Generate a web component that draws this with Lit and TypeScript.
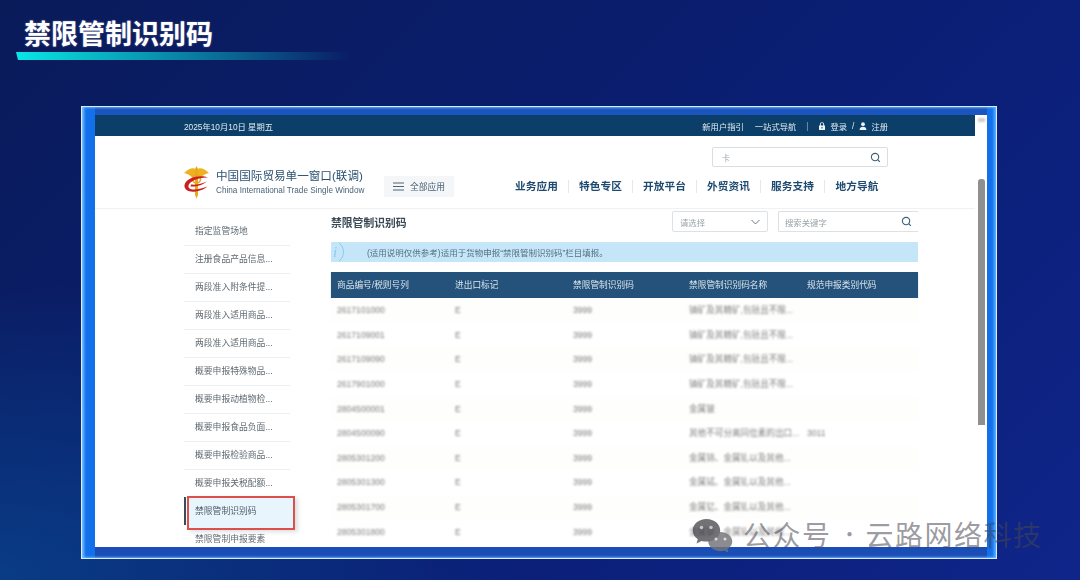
import { LitElement, html, css, svg } from 'lit';
import { customElement } from 'lit/decorators.js';

const sideItems = [
	'指定监管场地',
	'注册食品产品信息...',
	'两段准入附条件提...',
	'两段准入适用商品...',
	'两段准入适用商品...',
	'概要申报特殊物品...',
	'概要申报动植物检...',
	'概要申报食品负面...',
	'概要申报检验商品...',
	'概要申报关税配额...',
	'禁限管制识别码',
	'禁限管制申报要素'
];

const columns = ['商品编号/税则号列', '进出口标记', '禁限管制识别码', '禁限管制识别码名称', '规范申报类别代码'];

const rows = [
	['2617101000', 'E', '3999', '铀矿及其精矿,包括且不限...', ''],
	['2617109001', 'E', '3999', '铀矿及其精矿,包括且不限...', ''],
	['2617109090', 'E', '3999', '铀矿及其精矿,包括且不限...', ''],
	['2617901000', 'E', '3999', '铀矿及其精矿,包括且不限...', ''],
	['2804500001', 'E', '3999', '金属铍', ''],
	['2804500090', 'E', '3999', '其他不可分离同位素的出口...', '3011'],
	['2805301200', 'E', '3999', '金属铈、金属钆以及其他...', ''],
	['2805301300', 'E', '3999', '金属铽、金属钆以及其他...', ''],
	['2805301700', 'E', '3999', '金属钇、金属钆以及其他...', ''],
	['2805301800', 'E', '3999', '金属钕、金属钆以及其他...', '']
];

const searchIcon = svg`<svg class="glass" viewBox="0 0 12 12"><circle cx="5.5" cy="5.5" r="4" fill="none" stroke="#3d5f78" stroke-width="1.2"/><path d="M8.4 8.4l2.3 2.3" stroke="#3d5f78" stroke-width="1.2"/></svg>`;

@customElement('app-root')
export class AppRoot extends LitElement {
	static styles = css`
		:host {
			display: block;
			position: relative;
			width: 1080px;
			height: 580px;
			overflow: hidden;
			font-family: 'Liberation Sans', 'Noto Sans CJK SC', sans-serif;
			background:
				radial-gradient(520px 300px at 0% 100%, #0a3c86 0%, rgba(10, 60, 134, 0) 100%),
				linear-gradient(135deg, #0a1b5a 0%, #0a1e74 55%, #0f2589 100%);
		}

		/* slide heading */
		.heading {
			padding: 19px 0 0 16px;
		}
		.heading h1 {
			margin: 0 0 0 8px;
			font: 700 27px/27px 'Noto Sans CJK SC', sans-serif;
			color: #fff;
			text-shadow: 0 0 2px rgba(255, 255, 255, 0.35);
		}
		.underline {
			width: 334px;
			height: 8px;
			margin-top: 6px;
			background: linear-gradient(90deg, #08e6e6 0%, #08b4c4 25%, #0a6e98 60%, rgba(10, 40, 110, 0) 100%);
			clip-path: polygon(0 0, 100% 0, 100% 100%, 2px 100%);
		}

		/* glowing frame */
		.frame {
			box-sizing: border-box;
			width: 916px;
			height: 453px;
			margin: 46px 0 0 81px;
			padding: 8px 9px 11px 13px;
			border: 1px solid #d8ecff;
			background:
				linear-gradient(#1c54bf, #1c54bf) 13px 0 / calc(100% - 22px) 8px no-repeat,
				linear-gradient(#1a4db5, #1a4db5) 13px 100% / calc(100% - 22px) 11px no-repeat,
				#1170ea;
			box-shadow: inset 2px 0 3px #7cc4ff, inset -2px 0 3px #5bb4ff;
		}
		.screen {
			display: flex;
			height: 100%;
			overflow: hidden;
			background: #fff;
			filter: blur(0.5px);
		}
		.site {
			width: 880px;
			flex: none;
		}
		.rail {
			flex: 1;
			padding: 3px 0 0 3px;
		}
		.rail-cap {
			width: 7px;
			height: 4px;
			background: #ccc;
			filter: blur(1px);
		}
		.rail-thumb {
			width: 7px;
			height: 246px;
			margin-top: 57px;
			border-radius: 3px 3px 0 0;
			background: #8f8f8f;
		}

		/* dark strip on top of the portal */
		.topbar {
			display: flex;
			align-items: center;
			height: 21px;
			padding: 0 87px 0 89px;
			background: #0b3f69;
			color: #e2eaf0;
			font-size: 8.3px;
		}
		.topbar .links {
			display: flex;
			align-items: center;
			margin-left: auto;
		}
		.topbar .gap {
			margin-left: 11px;
		}
		.topbar .bar {
			margin: 0 10px 0 10px;
			opacity: 0.6;
		}
		.topbar svg {
			width: 8px;
			height: 8px;
			margin-right: 4px;
		}
		.topbar .slash {
			margin: 0 5px;
		}

		/* logo, search and navigation */
		.header {
			display: flex;
			box-sizing: border-box;
			height: 73px;
			padding-left: 88px;
			border-bottom: 1px solid #eff1f3;
		}
		.brand {
			display: flex;
			width: 201px;
			padding-top: 28px;
		}
		.brand svg {
			width: 27px;
			height: 35px;
			flex: none;
		}
		.brand-text {
			margin: 4px 0 0 6px;
		}
		.brand-cn {
			font-size: 11.6px;
			line-height: 16px;
			color: #2a5070;
			white-space: nowrap;
		}
		.brand-en {
			margin-top: 1px;
			font-size: 8.2px;
			line-height: 11px;
			color: #4b6478;
			white-space: nowrap;
		}
		.allapps {
			display: flex;
			align-items: center;
			justify-content: center;
			gap: 6px;
			width: 70px;
			height: 21px;
			margin-top: 40px;
			background: #f5f6f7;
			color: #456075;
			font-size: 8.8px;
		}
		.allapps svg {
			width: 11px;
			height: 9px;
		}
		.tools {
			flex: 1;
			display: flex;
			flex-direction: column;
			align-items: flex-end;
			padding: 11px 87px 0 0;
		}
		.search {
			display: flex;
			align-items: center;
			box-sizing: border-box;
			width: 176px;
			height: 20px;
			padding: 0 6px 0 9px;
			border: 1px solid #d9dee2;
			border-radius: 2px;
			color: #9aa6ae;
			font-size: 8px;
		}
		.glass {
			width: 11px;
			height: 11px;
			margin-left: auto;
		}
		.nav {
			display: flex;
			margin: 13px -1px 0 0;
		}
		.nav span {
			box-sizing: border-box;
			width: 64px;
			text-align: center;
			font-size: 10.7px;
			line-height: 13px;
			font-weight: 700;
			color: #1f4a70;
			border-right: 1px solid #e4e8eb;
		}
		.nav span:last-child {
			border-right: 0;
		}

		/* side menu and result table */
		.content {
			display: flex;
			padding: 2px 0 0 89px;
		}
		.side {
			width: 106px;
			padding-top: 7px;
			flex: none;
		}
		.side-item {
			box-sizing: border-box;
			height: 28px;
			padding: 0 0 0 11px;
			border-bottom: 1px solid #eceeef;
			line-height: 27px;
			font-size: 8.8px;
			color: #5f6a72;
			white-space: nowrap;
		}
		.side-item.on {
			position: relative;
			z-index: 0;
			border-bottom: 0;
			color: #4b5a66;
		}
		/* the red callout sits over the selected row */
		.side-item.on::before {
			content: '';
			position: absolute;
			left: 0;
			top: -1px;
			width: 1.5px;
			height: 28px;
			background: #3c4c5c;
		}
		.side-item.on::after {
			content: '';
			position: absolute;
			z-index: -1;
			left: 3px;
			top: -2px;
			width: 108px;
			height: 34px;
			box-sizing: border-box;
			border: 2px solid #dc4f4a;
			background: #e8f5fc;
			box-shadow: 3px 2px 4px rgba(120, 130, 140, 0.25);
		}
		.main {
			width: 587px;
			margin-left: 41px;
			flex: none;
		}
		.main-head {
			display: flex;
			align-items: center;
			height: 21px;
		}
		.main-head h2 {
			margin: 0;
			font-size: 10.8px;
			font-weight: 700;
			color: #3b4a55;
		}
		.select,
		.keyword {
			display: flex;
			align-items: center;
			box-sizing: border-box;
			height: 21px;
			border: 1px solid #dde1e4;
			color: #9aa3a9;
			font-size: 8.4px;
		}
		.select {
			width: 96px;
			margin-left: auto;
			padding: 0 7px;
			border-radius: 2px;
		}
		.select svg {
			width: 9px;
			height: 6px;
			margin-left: auto;
		}
		.keyword {
			width: 140px;
			margin-left: 10px;
			padding: 0 6px;
			border-right: 0;
			border-radius: 2px 0 0 2px;
		}
		.notice {
			display: flex;
			align-items: center;
			height: 20px;
			margin-top: 10px;
			overflow: hidden;
			background: #c5e6f9;
			color: #55707f;
			font-size: 8.5px;
		}
		.notice svg {
			width: 16px;
			height: 20px;
			flex: none;
		}
		.notice span {
			margin-left: 20px;
		}
		.table {
			margin-top: 10px;
		}
		.row {
			display: grid;
			grid-template-columns: 118px 118px 116px 118px 117px;
			align-items: center;
			height: 24.6px;
		}
		.row:nth-child(even) {
			background: #fefefd;
		}
		.row.head {
			height: 26px;
			background: #24527a;
			color: #d9e4ec;
			font-size: 8.7px;
			box-shadow: 0 1px 1px rgba(36, 82, 122, 0.4);
		}
		.row > div {
			padding-left: 6px;
			line-height: 12px;
			white-space: nowrap;
			overflow: hidden;
		}
		.row.body {
			font-size: 8.6px;
			color: #7d7d7d;
		}
		.row.body > div {
			filter: blur(1.3px);
			overflow: visible;
		}

		/* watermark lies over the slide */
		.mark {
			position: absolute;
			left: 692px;
			top: 518px;
			display: flex;
			align-items: center;
		}
		.mark svg {
			width: 41px;
			height: 35px;
			flex: none;
		}
		.mark-text {
			display: flex;
			margin: -3px 0 0 10px;
			font: 400 28px/34px 'Noto Sans CJK SC', sans-serif;
			letter-spacing: 1.5px;
			color: rgba(70, 70, 80, 0.55);
			white-space: nowrap;
		}
		.mark-dot {
			box-sizing: border-box;
			width: 34px;
			padding-left: 8px;
			font-size: 20px;
			letter-spacing: 0;
		}
	`;

	render() {
		return html`
			<div class="heading">
				<h1>禁限管制识别码</h1>
				<div class="underline"></div>
			</div>
			<div class="frame">
				<div class="screen">
					<div class="site">
						${this.renderTopbar()} ${this.renderHeader()}
						<div class="content">
							<div class="side">
								${sideItems.map(
									(t, i) => html`<div class="side-item ${i === 10 ? 'on' : ''}">${t}</div>`
								)}
							</div>
							${this.renderMain()}
						</div>
					</div>
					<div class="rail">
						<div class="rail-cap"></div>
						<div class="rail-thumb"></div>
					</div>
				</div>
			</div>
			<div class="mark">
				<svg viewBox="0 0 41 35">
					<path d="M14.500 1C6.800 1 .8 6 .8 12.400c0 3.600 2 6.700 5 8.800L4.500 25.500l5-2.600c1.600.5 3.200.7 5 .7 7.700 0 13.700-5 13.700-11.200S22.200 1 14.500 1z" fill="rgba(60,60,65,.72)"/>
					<circle cx="9.500" cy="9.500" r="1.800" fill="rgba(235,235,235,.7)"/>
					<circle cx="19" cy="9.500" r="1.800" fill="rgba(235,235,235,.7)"/>
					<path d="M28.500 14c-6.800 0-12.200 4.300-12.200 9.600s5.400 9.600 12.200 9.600c1.400 0 2.700-.2 4-.6l4 2.200-1.100-3.600c3-1.800 4.900-4.500 4.900-7.600 0-5.300-5.400-9.600-11.800-9.600z" fill="rgba(115,115,120,.82)"/>
					<circle cx="24" cy="21" r="1.500" fill="rgba(240,240,240,.8)"/>
					<circle cx="33" cy="21" r="1.500" fill="rgba(240,240,240,.8)"/>
				</svg>
				<div class="mark-text"><span>公众号</span><span class="mark-dot">·</span><span>云路网络科技</span></div>
			</div>
		`;
	}

	private renderTopbar() {
		return html`
			<div class="topbar">
				<span>2025年10月10日 星期五</span>
				<div class="links">
					<span>新用户指引</span>
					<span class="gap">一站式导航</span>
					<span class="bar">|</span>
					<svg viewBox="0 0 8 8">
						<path d="M1 3.500h.9V2.300a2.100 2.100 0 0 1 4.200 0v1.200H7V8H1zM2.800 3.500h2.400V2.300a1.200 1.200 0 0 0-2.400 0zM3.500 5v1.600h1V5z" fill="#eef3f6" fill-rule="evenodd"/>
					</svg>
					<span>登录</span>
					<span class="slash">/</span>
					<svg viewBox="0 0 8 8"><circle cx="4" cy="2.200" r="1.900" fill="#eef3f6"/><path d="M.6 8c0-2.200 1.500-3.300 3.400-3.300S7.400 5.800 7.400 8z" fill="#eef3f6"/></svg>
					<span>注册</span>
				</div>
			</div>
		`;
	}

	private renderHeader() {
		return html`
			<div class="header">
				<div class="brand">
					<svg viewBox="0 0 27 35">
						<path d="M13.500 6C11 3 6 4 1 9c4 1 6 2 7.500 4 1.500 1 8.500 1 10 0 1.500-2 3.500-3 7.500-4-5-5-10-6-12.500-3z" fill="#efb021"/>
						<path d="M13.500 2l1.500 3v26l-1.500 3.500L12 31V5z" fill="#e8a91c"/>
						<circle cx="13.500" cy="15" r="4" fill="none" stroke="#e8a91c" stroke-width="1.600"/>
						<path d="M25 13.500C18 10.500 3 13 1.500 21c-.8 5 5 7.500 11 6.500 5-.8 9-2.500 12-5-4 1.500-9 3-13.500 3-4 0-6-1.500-5.500-4C6.500 17 16 13 25 13.500z" fill="#c9201f"/>
						<path d="M8 20.500c5 .5 11-.5 16-3-4 3.500-11 5.500-16.500 5z" fill="#c9201f"/>
					</svg>
					<div class="brand-text">
						<div class="brand-cn">中国国际贸易单一窗口(联调)</div>
						<div class="brand-en">China International Trade Single Window</div>
					</div>
				</div>
				<div class="allapps">
					<svg viewBox="0 0 11 9"><path d="M0 1h11M0 4.500h11M0 8h11" stroke="#4d6477" stroke-width="1"/></svg>
					全部应用
				</div>
				<div class="tools">
					<div class="search"><span>卡</span>${searchIcon}</div>
					<div class="nav">
						<span>业务应用</span><span>特色专区</span><span>开放平台</span><span>外贸资讯</span><span>服务支持</span><span>地方导航</span>
					</div>
				</div>
			</div>
		`;
	}

	private renderMain() {
		return html`
			<div class="main">
				<div class="main-head">
					<h2>禁限管制识别码</h2>
					<div class="select">
						请选择
						<svg viewBox="0 0 9 6"><path d="M.5 1l4 4 4-4" fill="none" stroke="#6f7a82" stroke-width="1"/></svg>
					</div>
					<div class="keyword"><span>搜索关键字</span>${searchIcon}</div>
				</div>
				<div class="notice">
					<svg viewBox="0 0 16 20">
						<text x="2" y="15" font-size="15" font-style="italic" fill="#8ccbf0" font-family="Liberation Serif">i</text>
						<path d="M8 1c6 4 6 14 0 18" fill="none" stroke="#8ccbf0" stroke-width="1"/>
					</svg>
					<span>(适用说明仅供参考)适用于货物申报“禁限管制识别码”栏目填报。</span>
				</div>
				<div class="table">
					<div class="row head">${columns.map((c) => html`<div>${c}</div>`)}</div>
					${rows.map((r) => html`<div class="row body">${r.map((c) => html`<div>${c}</div>`)}</div>`)}
				</div>
			</div>
		`;
	}
}
